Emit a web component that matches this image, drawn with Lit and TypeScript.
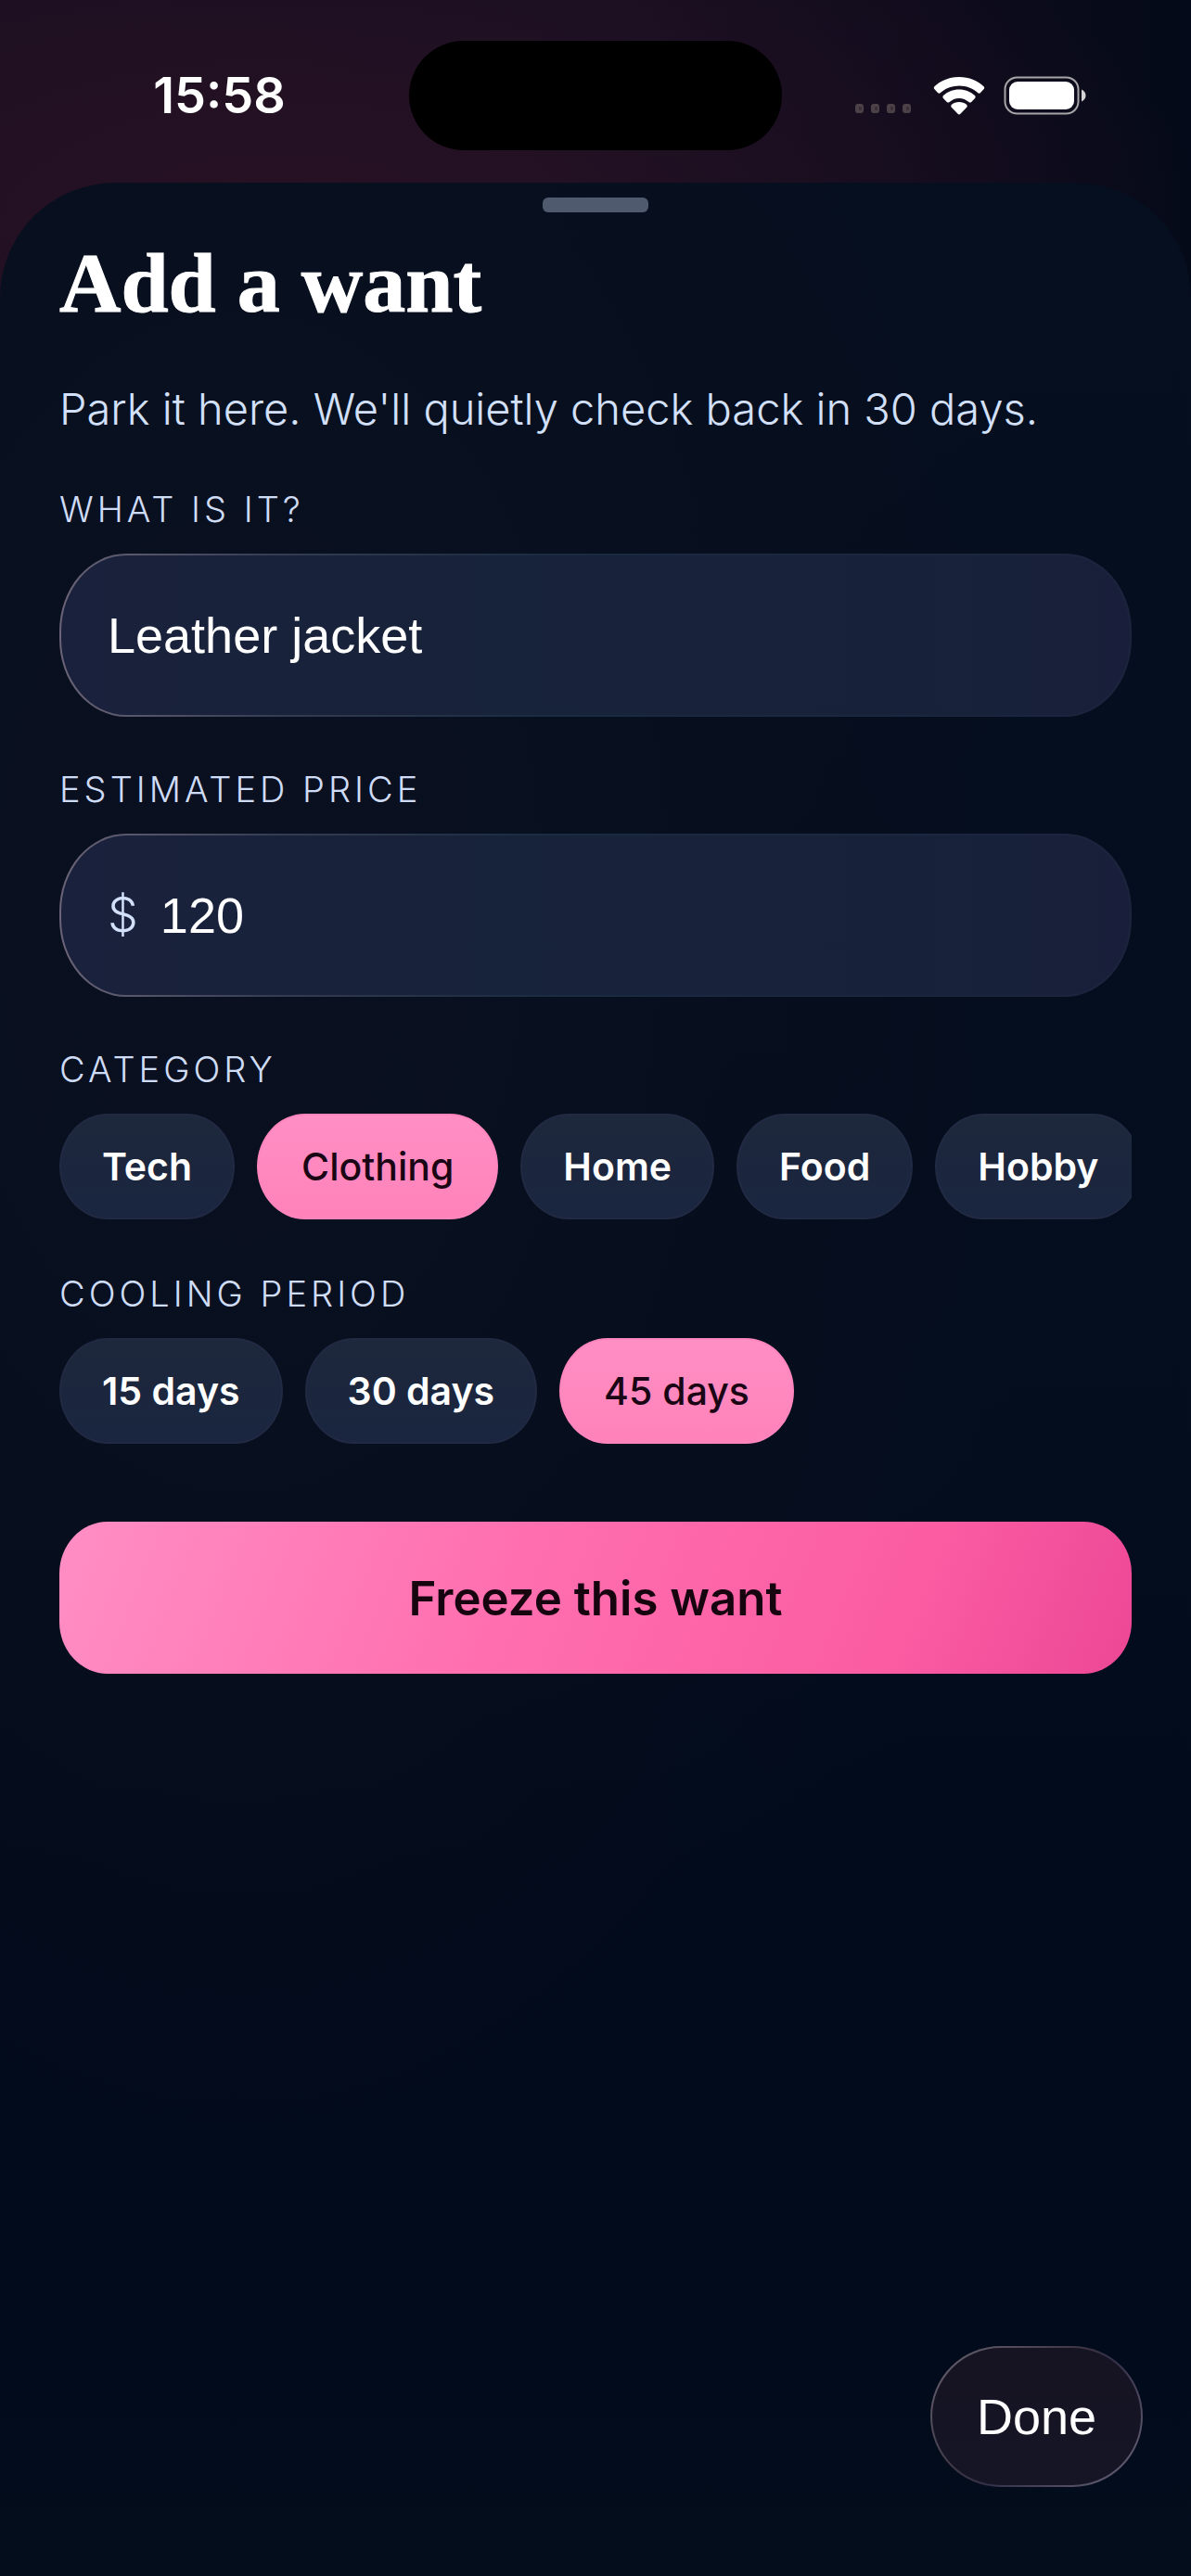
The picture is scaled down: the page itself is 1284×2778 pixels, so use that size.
import { LitElement, html, css, svg } from "lit";
import { customElement, property, state } from "lit/decorators.js";

@customElement("status-bar")
class StatusBar extends LitElement {
  static styles = css`
    :host {
      display: block;
      color: #fff;
    }
    .bar {
      display: grid;
      grid-template-columns: 1fr 402px 1fr;
      align-items: center;
      height: 197px;
      box-sizing: border-box;
      padding: 44px 0 35px;
    }
    .time {
      justify-self: center;
      padding-left: 32px;
      font-size: 54px;
      line-height: 64px;
      font-weight: 600;
    }
    .island {
      height: 118px;
      border-radius: 60px;
      background: #000;
    }
    .icons {
      justify-self: end;
      display: flex;
      align-items: center;
      gap: 20px;
      padding-right: 112px;
    }
    .icons svg {
      display: block;
    }
  `;

  render() {
    return html`
      <div class="bar">
        <time class="time">15:58</time>
        <div class="island"></div>
        <div class="icons">
          <svg width="64" height="42" viewBox="0 0 64 42" aria-hidden="true">
            ${[0, 17, 34, 51].map(
              (x) => svg`<rect x=${x} y="30" width="9" height="10" rx="3" fill="#4c4147"/>
                <rect x=${x + 4} y="33" width="3" height="4" rx="1" fill="#3a2f36"/>`,
            )}
          </svg>
          <svg width="56" height="42" viewBox="0 0 56 42" role="img" aria-label="Wi-Fi">
            <g fill="#fff">
              <path d="M28 1C17.500 1 8 5 1.400 11.300C.6 12.100.6 13.200 1.300 14L5 18C5.800 18.900 7 18.900 7.900 18.100C13.300 13.200 20.300 10.500 28 10.500S42.700 13.200 48.100 18.100C49 18.900 50.200 18.900 51 18L54.700 14C55.400 13.200 55.400 12.100 54.600 11.300C48 5 38.500 1 28 1Z"/>
              <path d="M28 14.500C21.300 14.500 15.400 17 11 21.100C10.200 21.900 10.200 23.100 10.900 23.900L14.800 28C15.600 28.800 16.700 28.800 17.600 28.100C20.400 25.600 24 24 28 24S35.600 25.600 38.400 28.100C39.300 28.800 40.400 28.800 41.200 28L45.100 23.900C45.800 23.100 45.800 21.900 45 21.100C40.600 17 34.700 14.500 28 14.500Z"/>
              <path d="M28 28C24.900 28 22.200 29 20 30.700C19 31.500 19 32.800 19.800 33.700L26.600 40.800C27.400 41.600 28.600 41.600 29.400 40.800L36.200 33.700C37 32.800 37 31.500 36 30.700C33.800 29 31.100 28 28 28Z"/>
            </g>
          </svg>
          <svg width="90" height="42" viewBox="0 0 90 42" role="img" aria-label="Battery full">
            <rect x="1.500" y="1.500" width="79" height="39" rx="13" fill="none" stroke="#a8a5a8" stroke-width="2"/>
            <rect x="6" y="6" width="70" height="30" rx="9" fill="#fff"/>
            <path d="M84 14.500C87 16 88.500 18 88.500 21S87 26 84 27.500Z" fill="#d5d3d6"/>
          </svg>
        </div>
      </div>
    `;
  }
}

@customElement("chip-group")
class ChipGroup extends LitElement {
  @property() legend = "";
  @property({ attribute: false }) options: string[] = [];
  @property() value = "";

  static styles = css`
    :host {
      display: block;
    }
    .group {
      display: flex;
      flex-direction: column;
      gap: 24px;
    }
    .legend {
      font-size: 38px;
      line-height: 48px;
      font-weight: 300;
      letter-spacing: 4px;
      text-transform: uppercase;
      color: #cfdcf6;
    }
    .chips {
      display: flex;
      gap: 24px;
      overflow: hidden;
    }
    .chip {
      flex: none;
      height: 114px;
      box-sizing: border-box;
      padding: 0 44px;
      border: 2px solid #212a42;
      border-radius: 52px / 57px;
      background: linear-gradient(#1d283c, #1a2540);
      color: #fff;
      font: inherit;
      font-size: 41px;
      line-height: 48px;
      font-weight: 600;
    }
    .chip[aria-pressed="true"] {
      padding: 0 46px;
      border-color: #ff86bd;
      background: linear-gradient(#ff8fc4, #ff82ba);
      color: #1a0514;
      font-weight: 500;
    }
  `;

  private pick(option: string) {
    this.value = option;
  }

  render() {
    return html`
      <div class="group" role="group" aria-labelledby="legend">
        <div class="legend" id="legend">${this.legend}</div>
        <div class="chips">
          ${this.options.map(
            (option) => html`<button
              class="chip"
              type="button"
              aria-pressed=${option === this.value ? "true" : "false"}
              @click=${() => this.pick(option)}
            >${option}</button>`,
          )}
        </div>
      </div>
    `;
  }
}

@customElement("app-root")
class AppRoot extends LitElement {
  @state() private item = "Leather jacket";
  @state() private price = "120";

  static styles = css`
    :host {
      display: block;
      font-family: Inter, "Liberation Sans", sans-serif;
    }
    .screen {
      display: flex;
      flex-direction: column;
      min-height: 100vh;
      background:
        radial-gradient(ellipse 1000px 420px at 24% 240px, #281124 0%, #22102280 60%, #22102200 100%),
        linear-gradient(90deg, #1b1022 0%, #1a1023 45%, #0d0b1b 80%, #040a19 100%);
    }
    .sheet {
      flex: 1;
      display: flex;
      flex-direction: column;
      padding: 16px 64px 96px;
      border-radius: 124px 124px 0 0;
      background:
        radial-gradient(ellipse 900px 1500px at 20% 30%, #0a1020 0%, #0a102000 100%),
        linear-gradient(#060f1f 0%, #040d1d 55%, #020b1b 70%, #020b1b 90%, #040d1c 100%);
    }
    .grabber {
      align-self: center;
      width: 114px;
      height: 16px;
      border-radius: 6px;
      background: #505a6e;
    }
    .title {
      margin: 24px 0 0;
      font-family: "Liberation Serif", serif;
      font-size: 92px;
      line-height: 104px;
      font-weight: 700;
      color: #fff;
      -webkit-text-stroke: 1px #fff;
    }
    .lead {
      margin: 56px 0 0;
      font-size: 47px;
      line-height: 56px;
      font-weight: 300;
      color: #d3e0fa;
    }
    .form {
      display: flex;
      flex-direction: column;
      margin-top: 56px;
    }
    .field {
      display: flex;
      flex-direction: column;
      gap: 24px;
      margin-bottom: 54px;
    }
    .label {
      font-size: 38px;
      line-height: 48px;
      font-weight: 300;
      letter-spacing: 4px;
      text-transform: uppercase;
      color: #cfdcf6;
    }
    .box {
      display: flex;
      align-items: center;
      gap: 24px;
      height: 176px;
      box-sizing: border-box;
      padding: 0 50px;
      border: 2px solid transparent;
      border-radius: 72px / 84px;
      background:
        linear-gradient(90deg, #1a213c 0%, #17233a 40%, #17223a 80%, #191f3a 100%) padding-box,
        linear-gradient(90deg, #6b6478 0%, #343d52 20%, #1a2b42 45%, #1b243d 100%) border-box;
    }
    .unit {
      font-size: 52px;
      line-height: 64px;
      font-weight: 300;
      color: #d3e0fa;
    }
    .input {
      flex: 1;
      min-width: 0;
      padding: 0;
      border: 0;
      outline: 0;
      background: none;
      color: #fff;
      font-family: "Liberation Sans", sans-serif;
      font-size: 54px;
      line-height: 64px;
      height: 64px;
    }
    .cooling {
      margin-top: 56px;
    }
    .submit {
      height: 164px;
      margin-top: 84px;
      border: 0;
      border-radius: 52px 52px 52px 52px / 56px;
      background: linear-gradient(112deg, #ff8ec4 0%, #ff70b0 40%, #fb5ca2 78%, #ec4796 100%);
      color: #16040f;
      font: inherit;
      font-size: 51px;
      font-weight: 600;
    }
    .done {
      align-self: flex-end;
      height: 152px;
      margin: auto -12px 0 0;
      padding: 0 48px;
      border: 2px solid transparent;
      border-radius: 76px;
      background:
        linear-gradient(#161422, #161526) padding-box,
        linear-gradient(135deg, #6a6472 0%, #3c3443 45%, #35304a 55%, #6a6478 100%) border-box;
      color: #fff;
      font-family: "Liberation Sans", sans-serif;
      font-size: 54px;
    }
  `;

  render() {
    return html`
      <div class="screen">
        <status-bar></status-bar>
        <main class="sheet">
          <div class="grabber"></div>
          <h1 class="title">Add a want</h1>
          <p class="lead">Park it here. We'll quietly check back in 30 days.</p>
          <form class="form" @submit=${(e: Event) => e.preventDefault()}>
            <div class="field">
              <label class="label" for="item">What is it?</label>
              <div class="box">
                <input class="input" id="item" type="text" .value=${this.item}
                  @input=${(e: Event) => (this.item = (e.target as HTMLInputElement).value)} />
              </div>
            </div>
            <div class="field">
              <label class="label" for="price">Estimated price</label>
              <div class="box">
                <span class="unit">$</span>
                <input class="input" id="price" type="text" inputmode="decimal" .value=${this.price}
                  @input=${(e: Event) => (this.price = (e.target as HTMLInputElement).value)} />
              </div>
            </div>
            <chip-group
              legend="Category"
              .options=${["Tech", "Clothing", "Home", "Food", "Hobby"]}
              value="Clothing"
            ></chip-group>
            <chip-group
              class="cooling"
              legend="Cooling period"
              .options=${["15 days", "30 days", "45 days"]}
              value="45 days"
            ></chip-group>
            <button class="submit" type="submit">Freeze this want</button>
          </form>
          <button class="done" type="button">Done</button>
        </main>
      </div>
    `;
  }
}
